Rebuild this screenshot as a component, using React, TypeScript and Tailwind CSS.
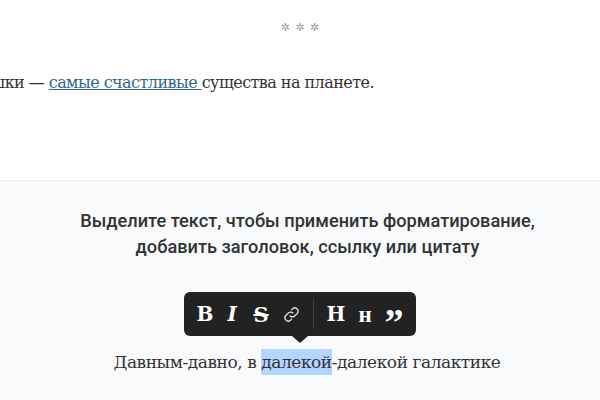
const serif = "font-['DejaVu_Serif',serif]";

function LinkIcon() {
  return (
    <svg width="17" height="17" viewBox="0 0 24 24" fill="none" stroke="currentColor" strokeWidth="1.9" strokeLinecap="round" strokeLinejoin="round">
      <path d="M10 14a4.500 4.500 0 0 0 6.500 0l3.500-3.500a4.600 4.600 0 0 0-6.500-6.500l-1.500 1.500" />
      <path d="M14 10a4.500 4.500 0 0 0-6.500 0L4 13.500A4.600 4.600 0 0 0 10.500 20l1.500-1.500" />
    </svg>
  );
}

function Toolbar() {
  return (
    <div className="relative flex h-[44px] w-[232px] items-center rounded-md bg-[#222222] pl-[13px] text-white">
      <span className={`${serif} w-[30px] text-[20px] font-bold leading-none`}>B</span>
      <span className={`${serif} w-[27px] pl-[1px] text-[20px] font-bold italic leading-none`}>I</span>
      <span className={`${serif} w-[29px] text-[21px] font-bold leading-none line-through`}>S</span>
      <span className="flex w-[30px] items-center text-[#dddddd]">
        <LinkIcon />
      </span>
      <span className="mr-[13px] h-[30px] w-px bg-[#444444]" />
      <span className={`${serif} w-[32px] text-[20px] font-bold leading-none`}>H</span>
      <span className="w-[26px] font-['Liberation_Serif',serif] text-[23px] font-bold leading-none">н</span>
      <span className="h-[14px] font-['Liberation_Serif',serif] text-[38px] font-bold leading-[30px]">”</span>
      <span className="absolute left-1/2 top-full h-0 w-0 -translate-x-1/2 border-x-[8px] border-t-[7px] border-x-transparent border-t-[#222222]" />
    </div>
  );
}

export default function App() {
  return (
    <div className="flex h-[400px] w-[600px] flex-col overflow-hidden bg-white">
      <div className="flex h-[180px] flex-col">
        <div className="pl-[1px] pt-[18px] text-center font-['DejaVu_Sans',sans-serif] text-[11px] leading-[20px] tracking-[1px] text-[#999999]">
          ✲ ✲ ✲
        </div>
        <div className={`${serif} mt-[32px] flex justify-end whitespace-nowrap pr-[226px] text-[16px] leading-[26px] tracking-[-0.55px] text-[#333333]`}>
          <span>
            ушки — <a className="text-[#336688] underline">самые счастливые </a>существа на планете.
          </span>
        </div>
      </div>
      <div className="flex flex-1 flex-col items-center border-t border-[#f0f0f0] bg-[#f9fafb]">
        <p className="mt-[27px] whitespace-nowrap pl-[15px] text-center font-['Roboto',sans-serif] text-[18.2px] font-medium leading-[26px] text-[#333333]">
          Выделите текст, чтобы применить форматирование,
          <br />
          добавить заголовок, ссылку или цитату
        </p>
        <div className="mt-[32px] pr-[1px]">
          <Toolbar />
        </div>
        <p className={`${serif} mt-[13px] pl-[14px] text-[17px] leading-[26px] tracking-[-0.45px] text-[#333333]`}>
          Давным-давно, в <span className="inline-block bg-[#b4d5fe]">далекой</span>-далекой галактике
        </p>
      </div>
    </div>
  );
}
